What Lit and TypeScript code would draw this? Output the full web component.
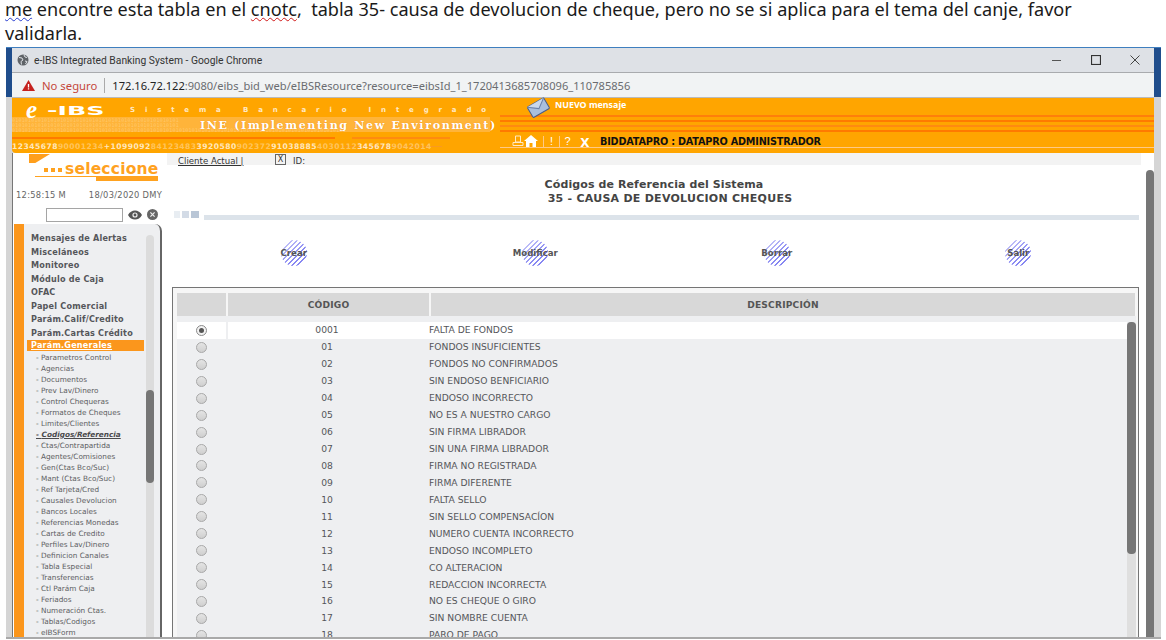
import { LitElement, html, css } from 'lit';
import { customElement } from 'lit/decorators.js';

const TOP_MENU = ['Mensajes de Alertas', 'Misceláneos', 'Monitoreo', 'Módulo de Caja', 'OFAC', 'Papel Comercial', 'Parám.Calif/Credito', 'Parám.Cartas Crédito'];
const SUB_MENU = ['Parametros Control', 'Agencias', 'Documentos', 'Prev Lav/Dinero', 'Control Chequeras', 'Formatos de Cheques', 'Limites/Clientes', 'Codigos/Referencia', 'Ctas/Contrapartida', 'Agentes/Comisiones', 'Gen(Ctas Bco/Suc)', 'Mant (Ctas Bco/Suc)', 'Ref Tarjeta/Cred', 'Causales Devolucion', 'Bancos Locales', 'Referencias Monedas', 'Cartas de Credito', 'Perfiles Lav/Dinero', 'Definicion Canales', 'Tabla Especial', 'Transferencias', 'Ctl Parám Caja', 'Feriados', 'Numeración Ctas.', 'Tablas/Codigos', 'eIBSForm'];
const ROWS = [['0001', 'FALTA DE FONDOS'], ['01', 'FONDOS INSUFICIENTES'], ['02', 'FONDOS NO CONFIRMADOS'], ['03', 'SIN ENDOSO BENFICIARIO'], ['04', 'ENDOSO INCORRECTO'], ['05', 'NO ES A NUESTRO CARGO'], ['06', 'SIN FIRMA LIBRADOR'], ['07', 'SIN UNA FIRMA LIBRADOR'], ['08', 'FIRMA NO REGISTRADA'], ['09', 'FIRMA DIFERENTE'], ['10', 'FALTA SELLO'], ['11', 'SIN SELLO COMPENSACÍON'], ['12', 'NUMERO CUENTA INCORRECTO'], ['13', 'ENDOSO INCOMPLETO'], ['14', 'CO ALTERACION'], ['15', 'REDACCION INCORRECTA'], ['16', 'NO ES CHEQUE O GIRO'], ['17', 'SIN NOMBRE CUENTA'], ['18', 'PARO DE PAGO']];
const ACTIONS = ['Crear', 'Modificar', 'Borrar', 'Salir'];
const BINARY = '0101010101010101010101010101010101010101010101010101';

@customElement('app-root')
export class AppRoot extends LitElement {
  static styles = css`
    :host { display: block; width: 1166px; height: 640px; overflow: hidden; background: #fff; font-family: "DejaVu Sans", sans-serif; color: #58595b; }
    .note { margin: -3px 0 0; height: 50px; padding-left: 5px; font: 18.1px/24px "Noto Sans", sans-serif; color: #1a1a1a; white-space: nowrap; overflow: hidden; }
    .sp-blue { text-decoration: underline wavy #2a3fd0 1px; }
    .sp-red { text-decoration: underline wavy #d01818 1px; }

    .window { margin-left: 6px; width: 1142px; height: 589px; border-top: 1px solid #3f7fbf; border-bottom: 2px solid #a9a9a9; padding: 0 7px 0 6px; overflow: hidden; background: linear-gradient(#1f4d8c 49px, #d5d5d5 49px); display: flex; flex-direction: column; }
    .titlebar { flex: none; height: 24px; background: #dee1e6; border-bottom: 1px solid #a9abae; display: flex; align-items: center; padding: 0 14px 0 5px; gap: 5px; font: 10.3px "Roboto", sans-serif; color: #333; }
    .titlebar .name { flex: 1; }
    .winctl { display: flex; gap: 29px; }
    .addr { flex: none; height: 24px; background: #f1f3f4; border-bottom: 1px solid #b9babc; display: flex; align-items: center; padding-left: 10px; font: 11.1px "Noto Sans", sans-serif; color: #6a6c70; }
    .addr .warn { color: #c4473a; margin-left: 7px; font-size: 11.3px; }
    .addr .sep { width: 1px; height: 15px; background: #aaa; margin: 0 7px; }
    .addr b { font-weight: 400; color: #222; }

    .banner { flex: none; height: 55px; box-sizing: border-box; border-radius: 0 0 0 4px; display: flex; background-color: #ffa500; background-repeat: no-repeat;
      background-image: linear-gradient(#ff7f0a,#ff7f0a), linear-gradient(#ff7a00,#ff7a00), linear-gradient(#ff8a10,#ff8a10), linear-gradient(#ff7a00,#ff7a00), linear-gradient(#ffb43a,#ffb43a), linear-gradient(#ff7a00,#ff7a00), linear-gradient(#ff8a10,#ff8a10), linear-gradient(#f99a20,#f99a20);
      background-size: 654px 2px, 654px 2px, 654px 2px, 654px 2px, 478px 15px, 323px 2px, 98px 2px, 100px 1px;
      background-position: 488px 17px, 488px 22px, 488px 27px, 488px 32px, 0 19px, 0 39px, 340px 39px, 330px 48px; }
    .ban-left { width: 488px; flex: none; display: flex; flex-direction: column; overflow: hidden; }
    .logo-row { height: 18px; margin-top: 3px; display: flex; align-items: center; color: #fff; padding-left: 14px; white-space: nowrap; }
    .logo-e { font: italic bold 25px/18px "Liberation Serif", serif; width: 21px; }
    .logo-ibs { font: bold 13px "DejaVu Sans", sans-serif; width: 83px; display: inline-block; transform: scaleX(1.95); transform-origin: left center; }
    .sistema { font: bold 7px "DejaVu Sans", sans-serif; letter-spacing: 9.85px; color: #ffe9c4; }
    .band { display: grid; height: 15px; margin-top: -1px; }
    .band > * { grid-area: 1 / 1; }
    .binary { font: 5px/5px "DejaVu Sans Mono", monospace; color: #ffc869; white-space: nowrap; letter-spacing: .2px; }
    .ine { font: bold 11.2px/14px "DejaVu Serif", serif; color: #fff; letter-spacing: 1.58px; padding-left: 188px; white-space: nowrap; text-shadow: 0 0 1px #e87a00; }
    .digits { margin-top: 9px; font: bold 7.6px/10px "DejaVu Sans", sans-serif; letter-spacing: .45px; color: #ffc45c; white-space: nowrap; }
    .digits b { color: #ffe7bd; }
    .ban-right { flex: 1; display: flex; flex-direction: column; }
    .msg { height: 29px; display: flex; padding-left: 26px; color: #fff; font: bold 8.9px "Noto Sans", sans-serif; gap: 4px; }
    .msg span { margin-top: 1px; line-height: 12px; }
    .msg svg { flex: none; margin-top: -1px; }
    .tools { margin-top: 8px; height: 12px; border-bottom: 1px solid #ffc985; display: flex; align-items: center; padding-left: 12px; color: #fff; }
    .tools svg { flex: none; }
    .tools .home { margin-right: 5px; }
    .tools .glyph { font: 11px "Liberation Sans", sans-serif; width: 15px; text-align: center; border-left: 1px solid #ffc985; height: 11px; line-height: 11px; }
    .tools .x { font: bold 12px "DejaVu Sans", sans-serif; border: 0; width: 20px; }
    .user { margin: 1px 0 0 5px; font: bold 9.7px "DejaVu Sans", sans-serif; color: #111; letter-spacing: -.2px; white-space: nowrap; }

    .body { flex: 1; min-height: 0; display: flex; background: #fff; border-left: 1px solid #777; }
    .side { width: 149px; flex: none; display: flex; flex-direction: column; }
    .sel { height: 36px; display: flex; flex-direction: column; }
    .corner { width: 21px; height: 9px; margin: 1px 0 0 16px; background: #ff9f1c; clip-path: polygon(0 0, 100% 0, 30% 100%, 0 100%); }
    .sel-row { display: flex; align-items: center; padding-left: 31px; height: 13px; color: #ffa21f; }
    .sq { height: 4px; background: #ffa21f; margin-right: 3px; width: 4px; }
    .sel-word { font: bold 15.5px/13px "DejaVu Sans", sans-serif; letter-spacing: .2px; }
    .sel-line { margin-left: 22px; width: 123px; height: 1px; background: #ffa21f; display: flex; justify-content: flex-end; }
    .sel-line i { display: block; width: 62px; height: 5px; background: #ffa21f; }
    .clock { margin-top: -1px; height: 14px; display: flex; font: 8.3px/14px "DejaVu Sans", sans-serif; letter-spacing: .3px; color: #666; padding-left: 3px; white-space: nowrap; }
    .clock span:nth-child(1) { width: 76px; }
    .clock span:nth-child(2) { width: 56px; }
    .search { height: 15px; margin-top: 5px; display: flex; align-items: center; padding-left: 33px; gap: 5px; }
    .search .inp { width: 75px; height: 12px; border: 1px solid #a5a5a5; background: #fff; }
    .nav { margin: 2px 0 0 1px; flex: 1; min-height: 0; display: flex; background: #eeeff1; border-right: 2px solid #666; border-radius: 0 7px 0 0; }
    .strip { width: 10px; flex: none; background: #fb961c; }
    .list { width: 120px; flex: none; padding: 8px 0 0 3px; box-sizing: border-box; }
    .top { height: 13.5px; font: bold 8.1px/13.5px "DejaVu Sans", sans-serif; letter-spacing: .2px; padding-left: 4px; color: #55565a; white-space: nowrap; }
    .top.on { background: #fb961c; color: #fff; height: 11px; line-height: 11px; margin-bottom: .5px; text-decoration: underline; }
    .sub { height: 11px; font: 7.3px/11px "DejaVu Sans", sans-serif; padding-left: 9px; color: #5d5e62; white-space: nowrap; }
    .sub.on { font-weight: bold; font-style: italic; text-decoration: underline; color: #4a4a4c; }
    .track { width: 8px; margin: 11px 0 0 2px; background: #dcdcdc; border-radius: 4px 4px 0 0; }
    .thumb { background: #767676; border-radius: 4px; }
    .t-nav { margin-top: 155px; height: 93px; }

    .main { flex: 1; min-width: 0; display: flex; flex-direction: column; overflow: hidden; }
    .client { flex: none; height: 12px; margin: 0 5px; background: #f3f3f3; display: flex; align-items: center; font: 8.6px "DejaVu Sans", sans-serif; color: #333; }
    .client .cl { margin: 3px 0 0 11px; width: 97px; white-space: nowrap; }
    .client .id { margin-top: 3px; }
    .xbox { width: 9px; height: 9px; border: 1px solid #666; font: 8px/9px "DejaVu Sans", sans-serif; text-align: center; margin-right: 7px; }
    .title { margin-top: 13px; text-align: center; font: bold 11px/14px "DejaVu Sans", sans-serif; letter-spacing: .1px; color: #444; }
    .title span { display: block; padding-left: 32px; letter-spacing: .26px; }
    .rule { margin: 5px 7px 0 12px; display: flex; height: 9px; gap: 2px; }
    .rule i { display: block; height: 7px; }
    .rule .s1 { width: 6px; background: #e8edf2; }
    .rule .s2 { width: 7px; background: #d3dbe6; }
    .rule .s3 { width: 8px; background: #b9c6d6; }
    .rule .bar { flex: 1; height: 5px; margin: 4px 0 0 3px; background: #dce3ea; }
    .actions { margin: 20px 7px 0 11px; display: grid; grid-template-columns: repeat(4, 1fr); height: 26px; }
    .actions > div { display: flex; justify-content: center; }
    .disc { width: 26px; height: 26px; border-radius: 50%; display: flex; justify-content: center; align-items: center; font: bold 8.6px "DejaVu Sans", sans-serif; color: #555; white-space: nowrap;
      background: linear-gradient(135deg, rgba(255,255,255,.65), rgba(255,255,255,0) 65%), repeating-linear-gradient(135deg, #8787f2 0 1.6px, #fff 1.6px 3.6px); }
    .panel { margin: 21px 7px 0 10px; flex: 1; min-height: 0; border: 1px solid #757575; border-bottom: 0; background: #f6f6f6; padding: 5px 3px 0 4px; display: flex; flex-direction: column; overflow: hidden; }
    .head { flex: none; display: grid; grid-template-columns: 49px 201px 1fr; column-gap: 2px; height: 23px; font: bold 9.1px/25px "DejaVu Sans", sans-serif; letter-spacing: .2px; color: #555; text-align: center; }
    .head div { background: #d8d8d8; }
    .tbody { flex: 1; min-height: 0; margin-right: -1px; background: #eeeff1; padding-top: 6px; display: flex; overflow: hidden; }
    .rows { width: 950px; flex: none; }
    .row { height: 16.94px; display: grid; grid-template-columns: 49px 198px 1fr; column-gap: 2px; align-items: center; font: 9.2px/16px "DejaVu Sans", sans-serif; color: #55565a; }
    .row.on { background: linear-gradient(90deg, #fff 49px, #eeeff1 49px 51px, #fff 51px); }
    .row .code { text-align: center; }
    .row .desc { padding-left: 1px; }
    .radio { justify-self: center; width: 9px; height: 9px; border-radius: 50%; border: 1px solid #a8a8a8; background: linear-gradient(#e4e4e4, #cfcfcf); display: flex; align-items: center; justify-content: center; }
    .radio.on { background: #f2f2f2; border-color: #8a8a8a; }
    .radio.on i { display: block; width: 5px; height: 5px; border-radius: 50%; background: #555; }
    .t-track { width: 9px; background: #dfdfdf; border-radius: 4px 4px 0 0; }
    .t-table { height: 232px; }
    .vbar { flex: none; width: 8px; margin-top: 17px; background: #767676; border-radius: 4px 4px 0 0; }
  `;

  private chromeIcons() {
    return html`<div class="winctl">
      <svg width="10" height="10" viewBox="0 0 10 10"><path d="M0 5.5h9" stroke="#555" fill="none"/></svg>
      <svg width="10" height="10" viewBox="0 0 10 10"><rect x=".5" y=".5" width="9" height="9" stroke="#333" stroke-width="1.2" fill="none"/></svg>
      <svg width="10" height="10" viewBox="0 0 10 10"><path d="M.5.5l9 9M9.5.5l-9 9" stroke="#444" fill="none"/></svg>
    </div>`;
  }

  private envelope() {
    return html`<svg width="25" height="22" viewBox="0 0 25 22">
      <g transform="rotate(-30 12 11)">
        <rect x="3" y="5" width="19" height="12" rx="1" fill="#a9bfdc" stroke="#4a5d86"/>
        <path d="M3 5l9.5 7L22 5" fill="#c9d8ec" stroke="#6b80a8"/>
      </g></svg>`;
  }

  render() {
    return html`
      <p class="note"><span class="sp-blue">me</span> encontre esta tabla en el <span class="sp-red">cnotc</span>,&nbsp; tabla 35- causa de devolucion de cheque, pero no se si aplica para el tema del canje, favor<br>validarla.</p>
      <div class="window">
        <div class="titlebar">
          <svg width="12" height="12" viewBox="0 0 12 12"><circle cx="6" cy="6" r="5.5" fill="#5f6368"/><path d="M2 3.5l3 .5 1 2-2 1.5.5 3M7 1l1 2 2 .5M8 7l2 .5-1.5 2.5" stroke="#dee1e6" fill="none"/></svg>
          <span class="name">e-IBS Integrated Banking System - Google Chrome</span>
          ${this.chromeIcons()}
        </div>
        <div class="addr">
          <svg width="13" height="11" viewBox="0 0 13 11"><path d="M6.5 0L13 11H0z" fill="#c5221f"/><path d="M6.5 4v3.4M6.5 8.3v1.2" stroke="#fff" stroke-width="1.3"/></svg>
          <span class="warn">No seguro</span><span class="sep"></span>
          <span><b>172.16.72.122</b>:9080/eibs_bid_web/eIBSResource?resource=eibsId_1_1720413685708096_110785856</span>
        </div>
        <div class="banner">
          <div class="ban-left">
            <div class="logo-row"><span class="logo-e">e</span><span class="logo-ibs">-IBS</span><span class="sistema">Sistema Bancario Integrado</span></div>
            <div class="band">
              <div class="binary">${BINARY}<br>${BINARY}<br>${BINARY}${BINARY}</div>
              <div class="ine">INE (Implementing New Environment)</div>
            </div>
            <div class="digits"><b>12345678</b>90001234<b>+1099092</b>84123483<b>3920580</b>902372<b>91038885</b>4030112<b>345678</b>9042014</div>
          </div>
          <div class="ban-right">
            <div class="msg">${this.envelope()}<span>NUEVO mensaje</span></div>
            <div class="tools">
              <svg width="12" height="12" viewBox="0 0 12 12"><path d="M3.5 1h5v6h-5zM1 7.5h10v3H1z" fill="none" stroke="#ffe9c4"/></svg>
              <svg class="home" width="14" height="12" viewBox="0 0 14 12"><path d="M7 0L0 6h2v6h3.5V8h3v4H12V6h2z" fill="#fff"/></svg>
              <span class="glyph">!</span><span class="glyph">?</span><span class="glyph x">X</span>
              <span class="user">BIDDATAPRO : DATAPRO ADMINISTRADOR</span>
            </div>
          </div>
        </div>
        <div class="body">
          <aside class="side">
            <div class="sel">
              <div class="corner"></div>
              <div class="sel-row"><span class="sq"></span><span class="sq"></span><span class="sq"></span><span class="sel-word">seleccione</span></div>
              <div class="sel-line"><i></i></div>
            </div>
            <div class="clock"><span>12:58:15 M</span><span>18/03/2020</span><span>DMY</span></div>
            <div class="search">
              <span class="inp"></span>
              <svg width="14" height="10" viewBox="0 0 14 10"><path d="M0 5c3-6 11-6 14 0-3 6-11 6-14 0z" fill="#555"/><circle cx="7" cy="5" r="2.6" fill="#eee"/><circle cx="7" cy="5" r="1.4" fill="#555"/></svg>
              <svg width="11" height="11" viewBox="0 0 11 11"><circle cx="5.5" cy="5.5" r="5.5" fill="#666"/><path d="M3.4 3.4l4.2 4.2M7.6 3.4l-4.2 4.2" stroke="#eee" stroke-width="1.2"/></svg>
            </div>
            <nav class="nav">
              <div class="strip"></div>
              <div class="list">
                ${TOP_MENU.map((m) => html`<div class="top">${m}</div>`)}
                <div class="top on">Parám.Generales</div>
                ${SUB_MENU.map((m) => html`<div class="sub ${m === 'Codigos/Referencia' ? 'on' : ''}">- ${m}</div>`)}
              </div>
              <div class="track"><div class="thumb t-nav"></div></div>
            </nav>
          </aside>
          <section class="main">
            <div class="client"><span class="cl"><u>Cliente Actual |</u></span><span class="xbox">X</span><span class="id">ID:</span></div>
            <div class="title">Códigos de Referencia del Sistema<span>35 - CAUSA DE DEVOLUCION CHEQUES</span></div>
            <div class="rule"><i class="s1"></i><i class="s2"></i><i class="s3"></i><div class="bar"></div></div>
            <div class="actions">${ACTIONS.map((a) => html`<div><div class="disc">${a}</div></div>`)}</div>
            <div class="panel">
              <div class="head"><div></div><div>CÓDIGO</div><div>DESCRIPCIÓN</div></div>
              <div class="tbody">
                <div class="rows">
                  ${ROWS.map((r, i) => html`<div class="row ${i === 0 ? 'on' : ''}">
                    <span class="radio ${i === 0 ? 'on' : ''}">${i === 0 ? html`<i></i>` : ''}</span>
                    <span class="code">${r[0]}</span><span class="desc">${r[1]}</span></div>`)}
                </div>
                <div class="t-track"><div class="thumb t-table"></div></div>
              </div>
            </div>
          </section>
          <div class="vbar"></div>
        </div>
      </div>
    `;
  }
}
